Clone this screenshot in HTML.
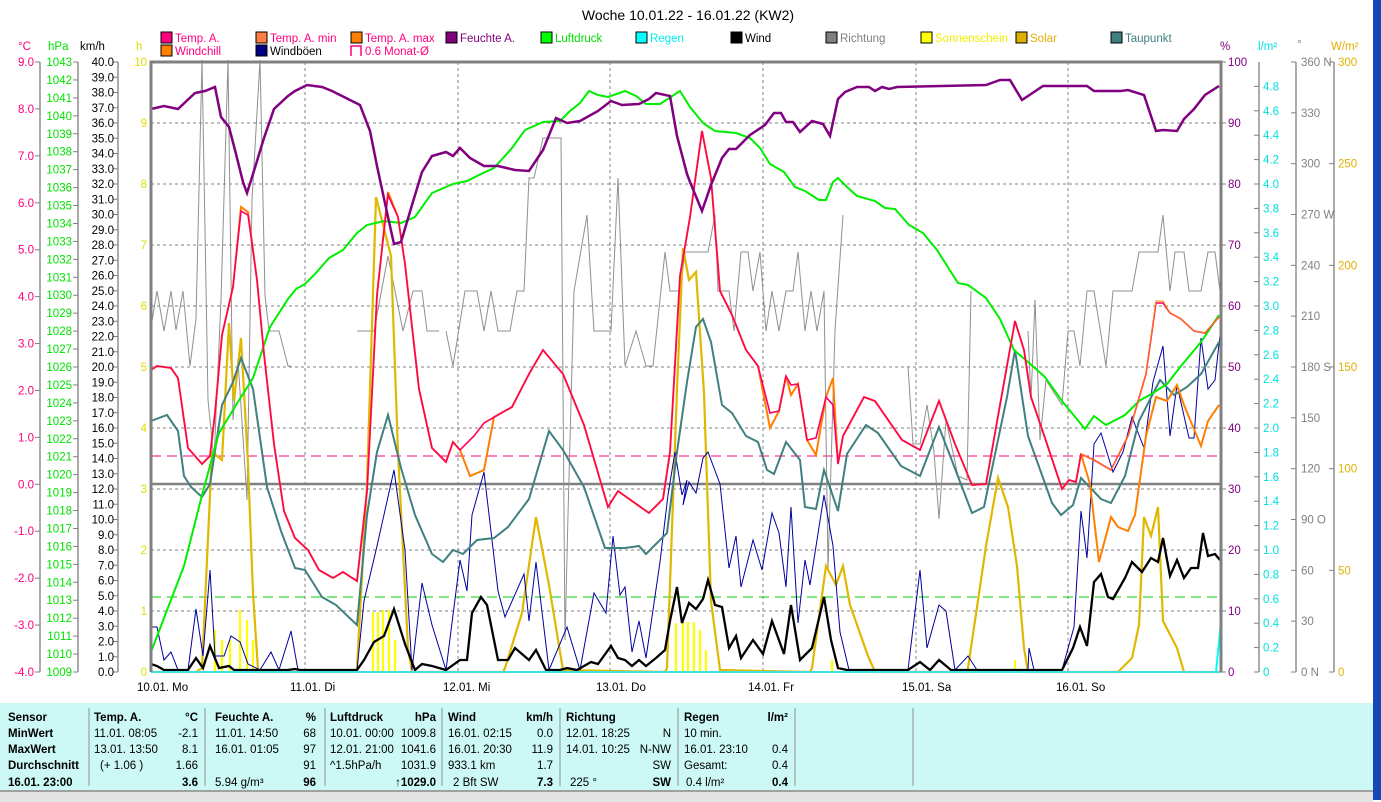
<!DOCTYPE html>
<html><head><meta charset="utf-8"><style>
body{margin:0;width:1381px;height:800px;overflow:hidden;background:#fff;font-family:"Liberation Sans",sans-serif;position:relative}
svg{position:absolute;left:0;top:0}
text{font-family:"Liberation Sans",sans-serif;font-size:11.5px}
.tb{position:absolute;left:0;top:703px;width:1373px;height:87px;background:#ccf8f6}
.bar{position:absolute;left:0;top:790px;width:1373px;height:10px;background:#e4e4e4;border-top:2px solid #a0a0a0}
.strip{position:absolute;left:1373px;top:0;width:8px;height:800px;background:#1448b8}
</style></head><body>
<div class="tb"></div><div class="bar"></div><div class="strip"></div>
<svg width="1381" height="800" viewBox="0 0 1381 800">
<text x="688" y="20" text-anchor="middle" style="font-size:14px">Woche 10.01.22 - 16.01.22 (KW2)</text>
<!-- legend -->
<g stroke="#000" stroke-width="1">
<rect x="161" y="32" width="11" height="11" fill="#ff0080"/><rect x="256" y="32" width="11" height="11" fill="#ff8040"/><rect x="351" y="32" width="11" height="11" fill="#ff8000"/><rect x="446" y="32" width="11" height="11" fill="#800080"/><rect x="541" y="32" width="11" height="11" fill="#00ff00"/><rect x="636" y="32" width="11" height="11" fill="#00ffff"/><rect x="731" y="32" width="11" height="11" fill="#000"/><rect x="826" y="32" width="11" height="11" fill="#808080"/><rect x="921" y="32" width="11" height="11" fill="#ffff00"/><rect x="1016" y="32" width="11" height="11" fill="#e0b000"/><rect x="1111" y="32" width="11" height="11" fill="#408080"/>
<rect x="161" y="45" width="11" height="11" fill="#ff8000"/><rect x="256" y="45" width="11" height="11" fill="#000080"/>
</g>
<path d="M351 56V46H361V56" fill="none" stroke="#ff0080" stroke-width="1.5"/>
<g style="font-size:11.5px">
<text x="175" y="42" fill="#ff0080">Temp. A.</text><text x="270" y="42" fill="#ff0080">Temp. A. min</text><text x="365" y="42" fill="#ff0080">Temp. A. max</text><text x="460" y="42" fill="#800080">Feuchte A.</text><text x="555" y="42" fill="#00e000">Luftdruck</text><text x="650" y="42" fill="#00f0f0">Regen</text><text x="745" y="42" fill="#000">Wind</text><text x="840" y="42" fill="#808080">Richtung</text><text x="935" y="42" fill="#f0f000">Sonnenschein</text><text x="1030" y="42" fill="#e0b000">Solar</text><text x="1125" y="42" fill="#408080">Taupunkt</text>
<text x="175" y="55" fill="#ff0080">Windchill</text><text x="270" y="55" fill="#000">Windböen</text><text x="365" y="55" fill="#ff0080">0.6 Monat-Ø</text>
</g>
<!-- axis headers -->
<text x="18" y="50" fill="#ff0080">°C</text><text x="48" y="50" fill="#00e000">hPa</text><text x="80" y="50" fill="#000">km/h</text><text x="136" y="50" fill="#e0e000">h</text>
<text x="1220" y="50" fill="#800080">%</text><text x="1258" y="50" fill="#00e0e0">l/m²</text><text x="1297" y="48" fill="#808080">°</text><text x="1331" y="50" fill="#e0b000">W/m²</text>
<!-- axis lines -->
<g stroke="#808080" stroke-width="1.3">
<path d="M40 62V672M78 62V672M118 62V672M1259 62V672M1296 62V672M1334 62V672"/>
</g>
<g id="ticks" stroke="#808080" stroke-width="1"></g>
<g id="labels"></g>
<!-- grid -->
<g stroke="#808080" stroke-width="1" stroke-dasharray="3,3">
<path d="M151 611H1221M151 550H1221M151 489H1221M151 428H1221M151 367H1221M151 306H1221M151 245H1221M151 184H1221M151 123H1221"/>
<path d="M305 62V672M458 62V672M610 62V672M763 62V672M916 62V672M1068 62V672"/>
</g>
<path d="M151 456H1221" stroke="#ff0080" stroke-width="1" stroke-dasharray="10,6"/>
<path d="M151 597H1221" stroke="#00d000" stroke-width="1" stroke-dasharray="10,6"/>
<path d="M151 484H1221" stroke="#808080" stroke-width="2.5"/>
<!-- sunshine bars -->
<g stroke="#ffff00" stroke-width="2.2">
<path d="M215 672V630M222 672V640M230 672V640M240 672V610M247 672V620M253 672V640M373 672V612M378 672V612M383 672V610M389 672V610M395 672V640M676 672V623M683 672V622M688 672V622M694 672V622M700 672V630M706 672V650M832 672V660M1015 672V660"/>
</g>
<!-- direction gray -->
<polyline fill="none" stroke="#909090" stroke-width="1" points="151,327 157,291 164,331 171,291 176,330 183,291 190,366 196,319 202,60 208,400 214,460 221,300 228,60 233,420 238,360 247,500 252,200 260,60 265,295 269,331 279,331 288,366 291,366"/>
<polyline fill="none" stroke="#909090" stroke-width="1" points="357,331 374,331 388,256 403,331 413,291 422,291 427,331 439,331"/>
<polyline fill="none" stroke="#909090" stroke-width="1" points="446,331 453,366 465,291 477,291 484,331 491,291 498,331 510,331 517,291 524,291 529,178 534,178 543,138 561,138 565,640 568,515 574,291 587,215 594,331 611,331 618,178 625,366 636,331 646,366 653,366 665,252 670,291 680,291 685,252 697,252 708,252 715,215 718,291 729,291 734,331 741,252 748,252 753,291 760,252 766,331 772,291 779,331 786,291 793,291 798,252 805,331 811,291 817,331 824,291 828,570 835,330 843,215"/>
<polyline fill="none" stroke="#909090" stroke-width="1" points="908,366 913,444 920,444 927,405 934,452 939,519 946,420 958,476 967,480 971,291"/>
<polyline fill="none" stroke="#909090" stroke-width="1" points="1028,331 1031,400 1035,300 1040,440 1046,380 1062,405 1068,331 1074,331 1080,366 1087,291 1094,291 1106,366 1113,291 1132,291 1139,252 1158,252 1163,215 1170,291 1175,252 1184,252 1189,291 1201,291 1208,252 1215,252 1220,291"/>
<!-- solar gold -->
<polyline fill="none" stroke="#e0b800" stroke-width="2.2" points="151,672 196,672 202,668 212,452 222,460 229,323 234,401 241,338 248,464 253,593 258,670 260,672 355,672 357,668 367,484 376,197 391,256 398,452 408,648 412,672 503,672 505,668 522,613 536,517 549,585 563,670 665,672 667,668 677,389 683,248 689,280 696,272 704,393 711,601 720,670 810,672 812,668 826,566 836,585 843,566 850,605 868,656 875,672 966,672 968,668 986,546 998,478 1008,507 1017,566 1024,648 1028,672 1118,672 1120,670 1132,658 1139,625 1144,517 1151,536 1158,507 1163,621 1177,648 1184,672 1221,672"/>
<!-- gusts blue -->
<polyline fill="none" stroke="#0000a0" stroke-width="1" points="151,627 157,627 164,660 171,652 178,670 188,670 196,609 203,656 210,570 215,656 224,656 231,636 240,642 248,664 260,670 271,652 279,670 291,631 298,670 357,670 364,601 377,546 394,470 405,550 412,670 422,583 432,625 446,670 460,560 467,591 472,515 484,472 498,591 505,617 524,574 529,621 536,562 549,670 567,627 580,670 594,593 606,613 613,536 620,595 625,587 632,652 639,621 646,658 660,562 668,495 675,452 682,495 687,480 683,505 689,482 696,493 703,458 708,452 720,484 729,568 736,536 741,587 753,540 762,570 772,513 779,533 786,587 791,507 798,623 805,560 810,585 824,495 833,546 840,632 849,670 908,670 920,570 927,648 939,605 946,611 955,670 968,656 977,670 1028,670 1029,648 1034,670 1062,670 1074,627 1081,511 1087,558 1094,444 1101,433 1113,472 1123,452 1132,417 1144,448 1153,382 1163,346 1170,436 1177,385 1189,438 1194,438 1201,338 1208,389 1215,380 1220,335"/>
<!-- wind black -->
<polyline fill="none" stroke="#000" stroke-width="2.3" points="151,664 157,666 164,670 188,670 196,658 203,668 210,646 219,668 229,666 234,670 288,670 295,669 300,670 357,670 364,660 374,642 384,636 394,609 405,644 415,670 422,664 432,666 446,670 460,660 467,660 472,613 481,597 487,605 498,660 508,660 515,648 529,660 536,650 546,670 560,670 567,668 577,670 591,662 598,664 611,646 618,658 625,660 632,666 639,660 646,666 656,658 665,650 670,621 677,587 682,623 689,603 696,609 703,599 708,580 715,605 722,607 729,648 736,636 741,658 753,640 763,654 772,621 784,654 791,605 800,660 812,648 824,597 831,640 838,668 847,670 908,670 920,662 930,670 939,660 951,670 1062,670 1073,648 1080,627 1087,646 1094,582 1101,574 1108,597 1113,599 1125,578 1132,562 1142,572 1151,558 1158,562 1163,538 1170,576 1177,560 1184,578 1191,568 1198,568 1203,533 1208,556 1215,554 1220,560"/>
<!-- dewpoint teal -->
<polyline fill="none" stroke="#408080" stroke-width="2" points="151,421 167,415 178,431 184,476 191,487 202,497 210,484 222,405 233,382 241,358 253,389 267,487 281,531 295,568 305,570 322,597 336,605 357,625 367,515 377,452 388,415 401,468 415,515 432,554 443,562 453,550 463,554 477,540 494,538 508,527 529,499 549,431 563,450 584,487 605,548 625,548 639,546 646,554 667,533 677,452 687,382 696,327 703,319 711,342 722,405 732,413 746,436 758,442 767,470 774,474 786,442 800,460 805,507 816,509 824,470 838,511 847,454 866,425 878,433 901,466 920,476 939,427 972,513 984,507 1007,397 1015,350 1028,436 1052,503 1061,515 1073,505 1081,478 1101,499 1111,503 1125,476 1139,421 1160,380 1174,395 1187,387 1201,374 1219,342"/>
<!-- pressure green -->
<polyline fill="none" stroke="#00ee00" stroke-width="2" points="151,652 184,566 202,495 219,433 236,405 253,378 270,327 288,299 296,289 305,284 315,274 329,258 343,250 357,233 367,225 384,221 401,223 415,217 432,193 453,184 467,181 481,174 494,168 512,148 525,130 543,122 560,121 570,111 580,103 589,91 598,95 608,97 625,91 636,96 646,104 660,104 680,91 690,107 703,123 715,131 736,133 750,138 760,148 770,164 784,172 795,187 805,191 819,200 826,200 833,182 838,178 847,187 857,196 875,201 885,208 895,209 909,225 923,233 937,250 958,283 968,285 986,298 1000,319 1014,350 1028,362 1045,377 1062,401 1085,429 1094,416 1106,425 1125,415 1139,401 1153,393 1167,384 1181,366 1201,342 1219,315"/>
<!-- temperature orange / red -->
<polyline fill="none" stroke="#ff8000" stroke-width="2" points="151,370 157,366 171,368 178,378 188,448 202,464 210,456 215,413 222,335 233,287 241,207 248,212 257,280 264,354 274,444 284,511 295,538 308,550 319,570 333,578 343,572 357,581 367,491 377,295 388,192 398,217 405,264 419,389 432,448 446,462 453,442 460,450 470,476 484,470 494,417 512,407 529,374 543,350 563,374 584,425 608,507 618,491 632,501 649,513 663,499 670,452 680,276 690,217 702,131 711,178 720,291 732,315 746,350 758,366 770,428 779,411 786,376 791,395 798,384 807,440 816,455 826,397 833,378 838,464 843,436 864,397 875,401 902,440 920,450 939,401 955,444 972,485 986,484 1000,405 1015,321 1024,350 1031,397 1045,438 1062,489 1069,480 1076,482 1081,454 1090,484 1099,562 1111,517 1118,527 1128,531 1135,515 1146,436 1156,397 1167,401 1177,385 1184,405 1201,446 1208,421 1219,405"/>
<polyline fill="none" stroke="#ff0060" stroke-width="1.6" points="151,370 157,366 171,368 178,378 188,448 202,464 210,456 215,413 222,335 233,287 241,211 248,215 257,280 264,354 274,444 284,511 295,538 308,550 319,570 333,578 343,572 357,581 367,491 377,295 388,195 398,217 405,264 419,389 432,448 446,462 453,442 460,450 474,436 484,423 512,407 529,374 543,350 563,374 584,425 608,507 618,491 632,501 649,513 663,499 670,452 680,276 690,217 702,131 711,178 720,291 732,315 746,350 758,366 770,413 779,411 786,376 791,385 798,384 807,440 816,438 826,397 833,405 838,464 843,436 864,397 875,401 902,440 920,450 939,401 955,444 972,485 986,484 1000,405 1015,321 1024,350 1031,397 1045,438 1062,489 1069,480 1076,482 1081,454 1094,460 1111,470 1128,436 1146,374 1156,303 1163,303 1170,313 1181,319 1194,331 1205,333 1219,317"/>
<polyline fill="none" stroke="#ff8000" stroke-width="1" points="1081,454 1094,460 1111,470 1128,436 1146,374 1156,301 1163,301 1170,313 1181,319 1194,331 1205,333 1219,317"/>
<!-- humidity purple -->
<polyline fill="none" stroke="#800080" stroke-width="2.5" points="151,109 164,106 178,109 195,93 205,91 215,87 221,117 229,127 236,154 243,182 247,193 253,174 264,138 274,109 288,96 295,91 307,85 322,87 332,91 346,98 360,105 370,131 377,166 388,217 394,244 401,242 412,205 422,172 432,156 446,152 453,156 460,148 470,158 484,166 498,166 515,170 529,171 543,150 556,118 567,123 580,121 598,111 611,101 622,105 639,104 649,99 656,93 670,96 677,136 687,174 690,182 702,211 711,185 722,158 729,149 736,149 750,135 765,125 774,113 781,113 786,122 793,122 800,132 812,121 823,124 830,136 838,99 845,92 857,87 869,87 875,91 882,87 889,89 897,87 986,85 1000,80 1010,80 1022,100 1043,86 1087,86 1094,91 1121,91 1128,90 1144,95 1156,131 1163,130 1177,131 1184,119 1194,109 1205,95 1219,86"/>
<!-- rain -->
<path d="M1216 672L1221 622" stroke="#00ffff" stroke-width="2"/>
<path d="M151 672H1221" stroke="#40e0e0" stroke-width="2"/>
<!-- frame -->
<path d="M151 672V62H1221V672" fill="none" stroke="#808080" stroke-width="3"/>
<!-- x labels -->
<g style="font-size:12px">
<text x="137" y="691">10.01.  Mo</text><text x="290" y="691">11.01.  Di</text><text x="443" y="691">12.01.  Mi</text><text x="596" y="691">13.01.  Do</text><text x="748" y="691">14.01.  Fr</text><text x="902" y="691">15.01.  Sa</text><text x="1056" y="691">16.01.  So</text>
</g>
<!-- table -->
<g stroke="#909090" stroke-width="1"><path d="M89 708V786M205 708V786M325 708V786M442 708V786M560 708V786M678 708V786M795 708V786M913 708V786"/></g>
<g style="font-size:11.5px">
<g font-weight="bold"><text x="8" y="721">Sensor</text><text x="8" y="737">MinWert</text><text x="8" y="753">MaxWert</text><text x="8" y="769">Durchschnitt</text><text x="8" y="786">16.01. 23:00</text>
<text x="94" y="721">Temp. A.</text><text x="198" y="721" text-anchor="end">°C</text><text x="215" y="721">Feuchte A.</text><text x="316" y="721" text-anchor="end">%</text><text x="330" y="721">Luftdruck</text><text x="436" y="721" text-anchor="end">hPa</text><text x="448" y="721">Wind</text><text x="553" y="721" text-anchor="end">km/h</text><text x="566" y="721">Richtung</text><text x="684" y="721">Regen</text><text x="788" y="721" text-anchor="end">l/m²</text>
<text x="198" y="786" text-anchor="end">3.6</text><text x="316" y="786" text-anchor="end">96</text><text x="436" y="786" text-anchor="end">↑1029.0</text><text x="553" y="786" text-anchor="end">7.3</text><text x="671" y="786" text-anchor="end">SW</text><text x="788" y="786" text-anchor="end">0.4</text></g>
<text x="94" y="737">11.01.  08:05</text><text x="198" y="737" text-anchor="end">-2.1</text><text x="94" y="753">13.01.  13:50</text><text x="198" y="753" text-anchor="end">8.1</text><text x="100" y="769">(+ 1.06 )</text><text x="198" y="769" text-anchor="end">1.66</text>
<text x="215" y="737">11.01.  14:50</text><text x="316" y="737" text-anchor="end">68</text><text x="215" y="753">16.01.  01:05</text><text x="316" y="753" text-anchor="end">97</text><text x="316" y="769" text-anchor="end">91</text><text x="215" y="786">5.94 g/m³</text>
<text x="330" y="737">10.01.  00:00</text><text x="436" y="737" text-anchor="end">1009.8</text><text x="330" y="753">12.01.  21:00</text><text x="436" y="753" text-anchor="end">1041.6</text><text x="330" y="769">^1.5hPa/h</text><text x="436" y="769" text-anchor="end">1031.9</text>
<text x="448" y="737">16.01.  02:15</text><text x="553" y="737" text-anchor="end">0.0</text><text x="448" y="753">16.01.  20:30</text><text x="553" y="753" text-anchor="end">11.9</text><text x="448" y="769">933.1 km</text><text x="553" y="769" text-anchor="end">1.7</text><text x="453" y="786">2 Bft SW</text>
<text x="566" y="737">12.01.  18:25</text><text x="671" y="737" text-anchor="end">N</text><text x="566" y="753">14.01.  10:25</text><text x="671" y="753" text-anchor="end">N-NW</text><text x="671" y="769" text-anchor="end">SW</text><text x="570" y="786">225 °</text>
<text x="684" y="737">10 min.</text><text x="684" y="753">16.01.  23:10</text><text x="788" y="753" text-anchor="end">0.4</text><text x="684" y="769">Gesamt:</text><text x="788" y="769" text-anchor="end">0.4</text><text x="686" y="786">0.4 l/m²</text>
</g>
</svg>
<script>
(function(){
var NS="http://www.w3.org/2000/svg",L=document.getElementById("labels"),T=document.getElementById("ticks");
function t(x,y,s,c,a){var e=document.createElementNS(NS,"text");e.setAttribute("x",x);e.setAttribute("y",y+4);e.setAttribute("fill",c);if(a)e.setAttribute("text-anchor",a);e.textContent=s;L.appendChild(e);}
function k(x1,x2,y){var e=document.createElementNS(NS,"line");e.setAttribute("x1",x1);e.setAttribute("x2",x2);e.setAttribute("y1",y);e.setAttribute("y2",y);T.appendChild(e);}
var i,y;
for(i=0;i<=13;i++){y=62+i*610/13;t(34,y,(9-i).toFixed(1),"#ff0080","end");k(35,40,y);}
for(i=0;i<=34;i++){y=62+i*610/34;t(72,y,String(1043-i),"#00e000","end");k(73,78,y);}
for(i=0;i<=40;i++){y=62+i*610/40;t(114,y,(40-i).toFixed(1),"#000","end");k(113,118,y);}
for(i=0;i<=10;i++){y=672-i*61;t(147,y,String(i),"#e0e000","end");}
for(i=0;i<=10;i++){y=62+i*61;t(1228,y,String(100-i*10),"#800080");k(1221,1226,y);}
for(i=1;i<=25;i++){y=62+i*24.4;t(1263,y,i==25?"0":(5-i*0.2).toFixed(1),"#00e0e0");k(1254,1259,y);}
var d={0:" N",3:" W",6:" S",9:"  O",12:"  N"};
for(i=0;i<=12;i++){y=62+i*610/12;t(1301,y,String(360-i*30)+(d[i]?d[i]:""),"#808080");k(1291,1296,y);}
for(i=0;i<=6;i++){y=62+i*610/6;t(1338,y,String(300-i*50),"#e0b000");k(1329,1334,y);}
})();
</script>
</body></html>
